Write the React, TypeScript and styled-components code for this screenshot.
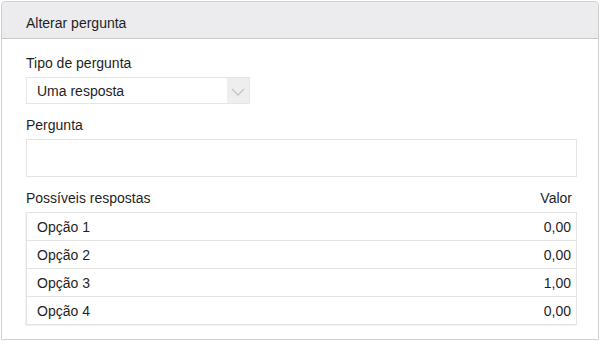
import React from "react";
import styled, { createGlobalStyle } from "styled-components";

const GlobalStyle = createGlobalStyle`
  body {
    margin: 0;
    background: #ffffff;
    font-family: "Liberation Sans", Arial, sans-serif;
    color: #1f1f1f;
  }
`;

const options = [
  { label: "Opção 1", value: "0,00" },
  { label: "Opção 2", value: "0,00" },
  { label: "Opção 3", value: "1,00" },
  { label: "Opção 4", value: "0,00" },
];

const App = () => {
  return (
    <>
      <GlobalStyle />
      <Panel>
        <Header>Alterar pergunta</Header>
        <Body>
          <Label>Tipo de pergunta</Label>
          <Select>
            <SelectText>Uma resposta</SelectText>
            <SelectArrow>
              <svg width="14" height="8" viewBox="0 0 14 8">
                <path d="M1 1l6 6 6-6" fill="none" stroke="#c4c4c4" strokeWidth="1.3" />
              </svg>
            </SelectArrow>
          </Select>

          <Label>Pergunta</Label>
          <TextBox />

          <LabelRow>
            <span>Possíveis respostas</span>
            <span>Valor</span>
          </LabelRow>
          <Table>
            {options.map((o) => (
              <Row key={o.label}>
                <span>{o.label}</span>
                <span>{o.value}</span>
              </Row>
            ))}
          </Table>
        </Body>
      </Panel>
    </>
  );
};

export default App;

const Panel = styled.div`
  box-sizing: border-box;
  width: 598px;
  height: 339px;
  margin: 1px 0 0 1px;
  border: 1px solid #cfcfcf;
  border-radius: 4px 4px 0 0;
  background: #fff;
  overflow: hidden;
`;

const Header = styled.div`
  box-sizing: border-box;
  height: 37px;
  padding: 13px 24px 0;
  background: #ececee;
  border-bottom: 1px solid #c9c9cb;
  font-size: 14px;
  line-height: 16px;
`;

const Body = styled.div`
  padding: 16px 21px 0 24px;
  display: flex;
  flex-direction: column;
  font-size: 14px;
  line-height: 16px;
`;

const Label = styled.div`
  margin-bottom: 6px;
`;

const LabelRow = styled.div`
  display: flex;
  justify-content: space-between;
  padding-right: 5px;
  margin-bottom: 6px;
`;

const Select = styled.div`
  box-sizing: border-box;
  width: 224px;
  height: 27px;
  display: flex;
  border: 1px solid #e6e6e6;
  margin-bottom: 13px;
`;

const SelectText = styled.div`
  flex: 1;
  padding-left: 10px;
  display: flex;
  align-items: center;
`;

const SelectArrow = styled.div`
  width: 22px;
  background: #eeeeee;
  display: flex;
  align-items: center;
  justify-content: center;
  padding-top: 2px;
  box-sizing: border-box;
`;

const TextBox = styled.div`
  box-sizing: border-box;
  height: 38px;
  border: 1px solid #e4e4e4;
  margin-bottom: 13px;
`;

const Table = styled.div`
  border: 1px solid #e4e4e4;
  border-top: none;
  box-shadow: -1px 1px 0 #f2f2f2;
`;

const Row = styled.div`
  box-sizing: border-box;
  height: 28px;
  display: flex;
  align-items: center;
  justify-content: space-between;
  padding: 0 5px 0 10px;
  border-top: 1px solid #e4e4e4;
`;
